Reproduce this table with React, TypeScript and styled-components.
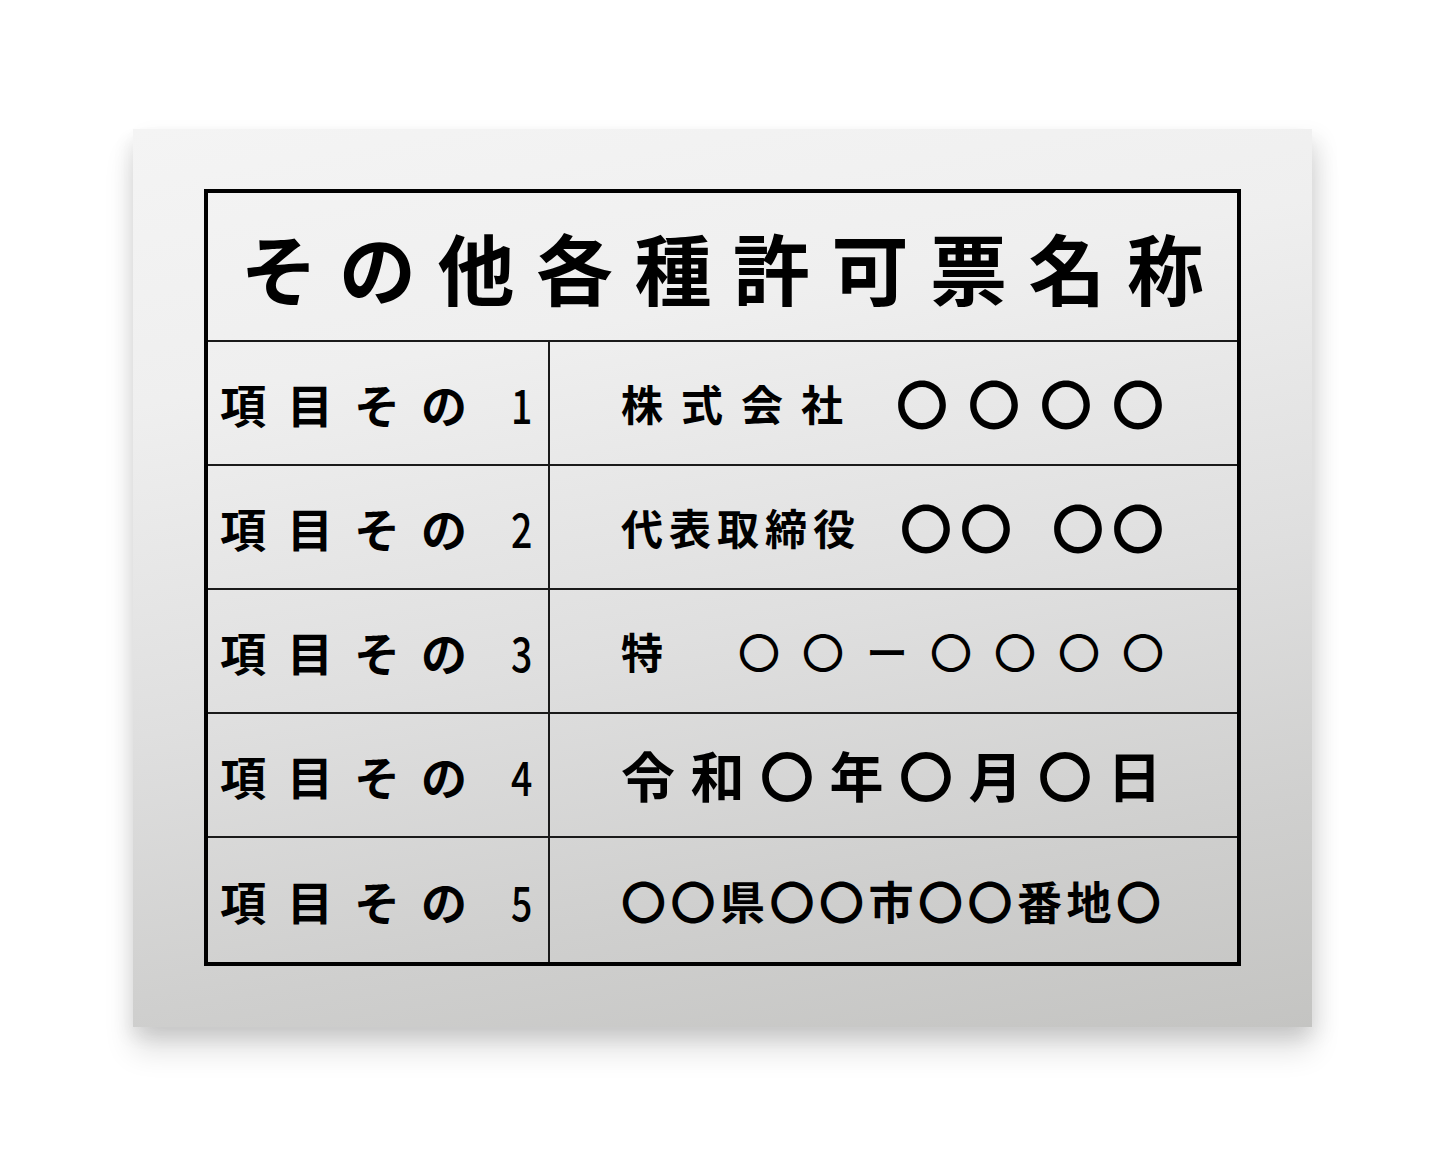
import React from "react";
import styled, { createGlobalStyle } from "styled-components";

const Global = createGlobalStyle`
  html, body { margin: 0; padding: 0; background: #ffffff; }
  body { font-family: "Noto Sans CJK JP", "Noto Sans", sans-serif; color: #000; }
`;

const Page = styled.div`
  width: 1445px;
  height: 1156px;
  box-sizing: border-box;
  padding-top: 129px;
  display: flex;
  justify-content: center;
  align-items: flex-start;
`;

const Plate = styled.div`
  width: 1179px;
  height: 898px;
  box-sizing: border-box;
  padding: 60px 71px 61px 71px;
  background: linear-gradient(170deg, #f4f4f4 0%, #efefef 25%, #dfdfdf 55%, #cfcfce 80%, #c4c4c2 100%);
  box-shadow: 0 24px 28px rgba(0, 0, 0, 0.12), 8px 8px 20px rgba(0, 0, 0, 0.08), -6px 10px 16px rgba(0, 0, 0, 0.05);
`;

const Board = styled.div`
  height: 100%;
  box-sizing: border-box;
  border: 4px solid #000;
  display: grid;
  grid-template-rows: 149px repeat(5, 1fr);
`;

const TitleCell = styled.div`
  display: flex;
  align-items: center;
  justify-content: center;
  border-bottom: 2px solid #1a1a1a;
  font-size: 77px;
  font-weight: 700;
  letter-spacing: 21.5px;
  padding-left: 21px;
  line-height: 1;
`;

const Row = styled.div<{ $last?: boolean }>`
  display: grid;
  grid-template-columns: 342px 1fr;
  border-bottom: ${(p) => (p.$last ? "none" : "2px solid #1a1a1a")};
`;

const LabelCell = styled.div`
  display: flex;
  align-items: center;
  justify-content: space-between;
  padding: 0 13px 0 12px;
  border-right: 2px solid #1a1a1a;
  line-height: 1;
`;

const LabelKana = styled.span`
  font-size: 46px;
  font-weight: 700;
  letter-spacing: 21px;
  margin-right: -21px;
`;

const Digit = styled.span`
  display: inline-block;
  font-size: 48px;
  font-weight: 500;
  transform: scaleX(0.78);
`;

const ValueCell = styled.div`
  display: flex;
  align-items: center;
  justify-content: space-between;
  padding: 0 73px 0 71px;
  line-height: 1;
`;

const Seg = styled.span<{ $size: number; $ls: number; $weight?: number }>`
  font-size: ${(p) => p.$size}px;
  font-weight: ${(p) => p.$weight ?? 700};
  letter-spacing: ${(p) => p.$ls}px;
  margin-right: ${(p) => -p.$ls}px;
  white-space: pre;
`;

const Group = styled.span<{ $gap: number }>`
  display: flex;
  align-items: center;
  gap: ${(p) => p.$gap}px;
`;

const rows = [
  {
    n: "1",
    value: (
      <>
        <Seg $size={42} $ls={18}>株式会社</Seg>
        <Seg $size={52} $ls={20}>〇〇〇〇</Seg>
      </>
    ),
  },
  {
    n: "2",
    value: (
      <>
        <Seg $size={42} $ls={6}>代表取締役</Seg>
        <Group $gap={40}>
          <Seg $size={52} $ls={8}>〇〇</Seg>
          <Seg $size={52} $ls={8}>〇〇</Seg>
        </Group>
      </>
    ),
  },
  {
    n: "3",
    value: (
      <>
        <Seg $size={42} $ls={0}>特</Seg>
        <Seg $size={42} $ls={22} $weight={500}>〇〇ー〇〇〇〇</Seg>
      </>
    ),
  },
  {
    n: "4",
    value: <Seg $size={54} $ls={15.5}>令和〇年〇月〇日</Seg>,
  },
  {
    n: "5",
    value: <Seg $size={45} $ls={4.5}>〇〇県〇〇市〇〇番地〇</Seg>,
  },
];

export default function App() {
  return (
    <>
      <Global />
      <Page>
        <Plate>
          <Board>
            <TitleCell>その他各種許可票名称</TitleCell>
            {rows.map((r, i) => (
              <Row key={r.n} $last={i === rows.length - 1}>
                <LabelCell>
                  <LabelKana>項目その</LabelKana>
                  <Digit>{r.n}</Digit>
                </LabelCell>
                <ValueCell>{r.value}</ValueCell>
              </Row>
            ))}
          </Board>
        </Plate>
      </Page>
    </>
  );
}
